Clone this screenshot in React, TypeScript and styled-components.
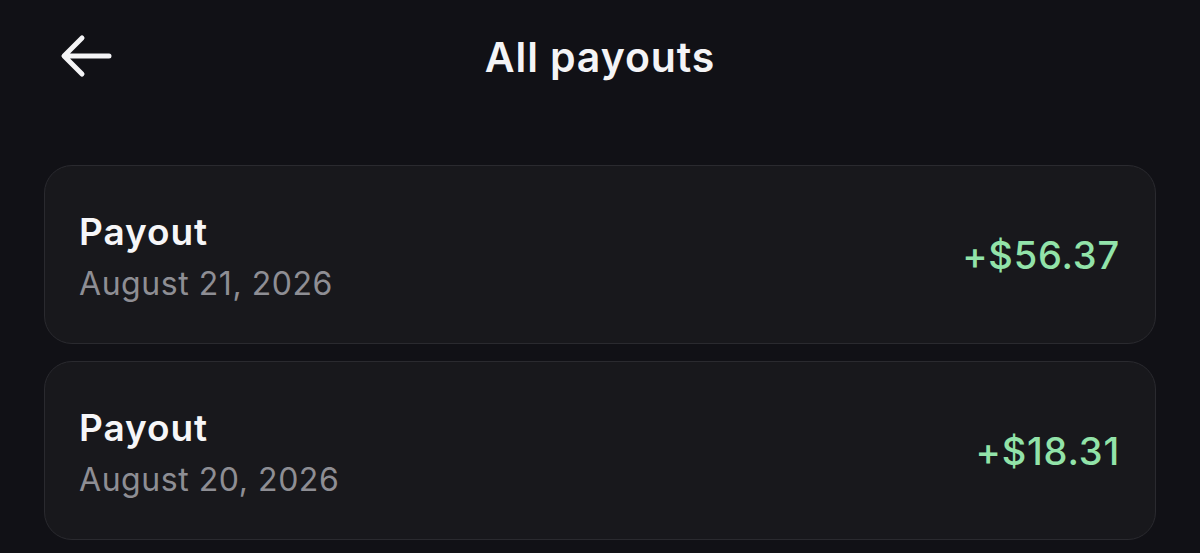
import React from "react";
import styled, { createGlobalStyle } from "styled-components";

const Global = createGlobalStyle`
  html, body { margin: 0; padding: 0; background: #111116; }
  body { font-family: Inter, "Noto Sans", sans-serif; -webkit-font-smoothing: antialiased; }
`;

const Page = styled.div`
  width: 1200px;
  height: 553px;
  background: #111116;
  box-sizing: border-box;
  padding: 0 44px;
  overflow: hidden;
`;

const Header = styled.header`
  position: relative;
  height: 114px;
  display: flex;
  align-items: center;
  justify-content: center;
`;

const BackButton = styled.button`
  position: absolute;
  left: 14px;
  top: 32px;
  width: 56px;
  height: 48px;
  padding: 0;
  border: none;
  background: transparent;
  display: flex;
  align-items: center;
  justify-content: center;
  cursor: pointer;
`;

const Title = styled.h1`
  margin: 0;
  font-size: 41px;
  font-weight: 600;
  color: #f4f4f6;
  letter-spacing: 0.9px;
`;

const List = styled.div`
  margin-top: 51px;
  display: flex;
  flex-direction: column;
  gap: 17px;
`;

const Card = styled.div`
  height: 179px;
  box-sizing: border-box;
  border: 1.5px solid #2a2a2f;
  border-radius: 28px;
  background: #18181c;
  display: flex;
  align-items: center;
  justify-content: space-between;
  padding: 0 35px 0 34px;
`;

const Info = styled.div`
  display: flex;
  flex-direction: column;
  gap: 12px;
  margin-top: 4px;
`;

const Label = styled.div`
  font-size: 37px;
  line-height: 42px;
  font-weight: 600;
  color: #f6f6f8;
  letter-spacing: 0.9px;
`;

const DateText = styled.div`
  font-size: 32px;
  line-height: 38px;
  font-weight: 400;
  color: #8e8e94;
  letter-spacing: 0.55px;
`;

const Amount = styled.div`
  font-size: 38px;
  font-weight: 500;
  color: #92e3a9;
  letter-spacing: 0.8px;
`;

const payouts = [
  { date: "August 21, 2026", amount: "+$56.37" },
  { date: "August 20, 2026", amount: "+$18.31" },
];

export default function App() {
  return (
    <>
      <Global />
      <Page>
        <Header>
          <BackButton aria-label="Back">
            <svg width="56" height="48" viewBox="0 0 56 48" fill="none">
              <path
                d="M51 24H7M24 6L6 24L24 42"
                stroke="#f4f4f6"
                strokeWidth="5"
                strokeLinecap="round"
                strokeLinejoin="round"
              />
            </svg>
          </BackButton>
          <Title>All payouts</Title>
        </Header>
        <List>
          {payouts.map((p) => (
            <Card key={p.date}>
              <Info>
                <Label>Payout</Label>
                <DateText>{p.date}</DateText>
              </Info>
              <Amount>{p.amount}</Amount>
            </Card>
          ))}
        </List>
      </Page>
    </>
  );
}
